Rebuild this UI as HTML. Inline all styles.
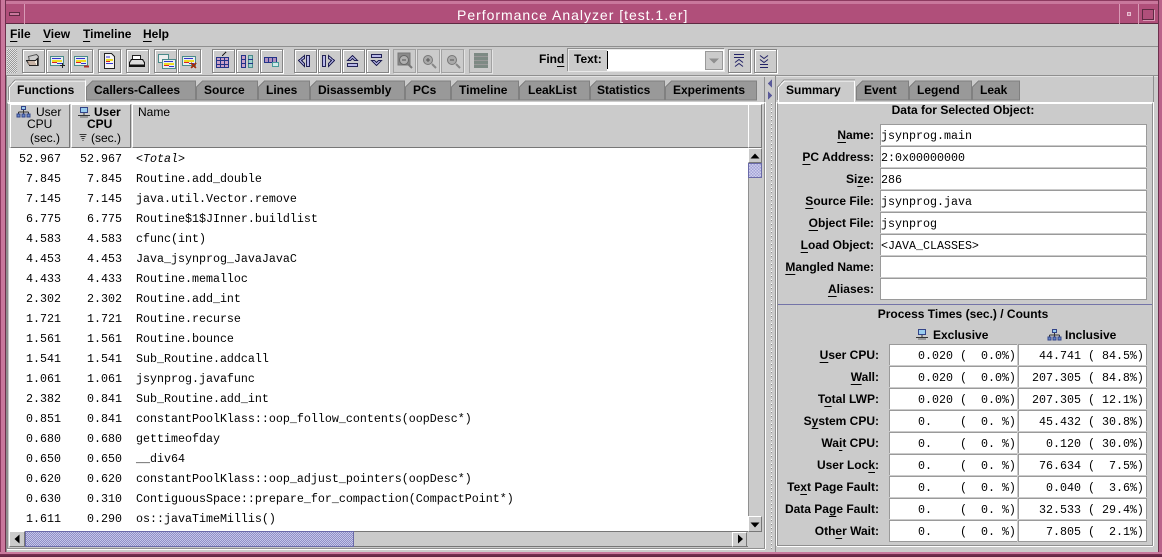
<!DOCTYPE html>
<html><head><meta charset="utf-8"><title>Performance Analyzer</title>
<style>
html,body{margin:0;padding:0;background:#ccc}
#w{position:relative;width:1162px;height:557px;overflow:hidden;background:#cbcbcb;font:bold 12px "Liberation Sans",sans-serif;color:#000}
#w div{position:absolute;box-sizing:border-box}
.t{white-space:pre;line-height:14px;height:14px}
.r{text-align:right}
.c{text-align:center}
.n{font-weight:normal}
.m{font:11.67px/22px "Liberation Mono",monospace;white-space:pre;height:20px}
u{text-underline-offset:3px;text-decoration-thickness:1px}
.f{background:#fff;border:1px solid #9a9a9a;outline:1px solid #cbcbcb}
.b{width:23px;height:24px;top:49px;border:1px solid #858585;box-shadow:1px 1px 0 #fff,inset 1px 1px 0 #fff}
.d{width:23px;height:24px;top:49px;border:1px solid #a2a2a2;box-shadow:1px 1px 0 #e4e4e4}
svg{position:absolute;left:0;top:0;shape-rendering:crispEdges}
</style></head><body>
<div id="w">
<!-- window frame -->
<div style="left:0;top:0;width:1162px;height:5px;background:#c9779c;border-top:1px solid #8d3a60"></div>
<div style="left:0;top:4px;width:1162px;height:20px;background:#b04f7a;border-bottom:1px solid #5e2a42"></div>
<div style="left:0;top:0;width:6px;height:557px;background:#c9779c;border-left:1px solid #8d3a60;border-right:1px solid #6d304d"></div>
<div style="left:1158px;top:0;width:4px;height:557px;background:#b9628a;border-left:1px solid #6d304d"></div>
<div style="left:0;top:552px;width:1162px;height:5px;background:linear-gradient(#c9779c 0,#c9779c 2px,#7a2f52 2px,#5c2340 5px)"></div>
<div style="left:24px;top:4px;width:1px;height:20px;background:#d99ab6"></div>
<div style="left:1119px;top:4px;width:1px;height:20px;background:#d99ab6"></div>
<div style="left:1138px;top:4px;width:1px;height:20px;background:#d99ab6"></div>
<div style="left:9px;top:12px;width:11px;height:4px;background:#c9779c;border:1px solid #5e2a42"></div>
<div style="left:1127px;top:12px;width:4px;height:4px;background:#c9779c;border:1px solid #e6bfd0"></div>
<div style="left:1142px;top:9px;width:12px;height:11px;border:1px solid #5e2a42;box-shadow:1px 1px 0 #d99ab6"></div>
<div class="t n" style="left:457px;top:8px;color:#fff;font-size:14px;line-height:15px;height:15px;letter-spacing:.98px">Performance Analyzer [test.1.er]</div>

<!-- menu -->
<div class="t" style="left:10px;top:27px"><u>F</u>ile</div>
<div class="t" style="left:43px;top:27px"><u>V</u>iew</div>
<div class="t" style="left:83px;top:27px"><u>T</u>imeline</div>
<div class="t" style="left:143px;top:27px"><u>H</u>elp</div>
<div style="left:6px;top:46px;width:1152px;height:1px;background:#8f8f8f"></div>
<div style="left:6px;top:75px;width:1152px;height:1px;background:#8f8f8f"></div>
<div style="left:6px;top:76px;width:1152px;height:1px;background:#e2e2e2"></div>
<div style="left:7px;top:49px;width:10px;height:24px;background:conic-gradient(#9a9a9a 25%,#e4e4e4 0 50%,#9a9a9a 0 75%,#e4e4e4 0) 0 0/2px 2px"></div>

<!-- toolbar buttons -->
<div class="b" style="left:22px"></div><div class="b" style="left:46px"></div><div class="b" style="left:70px"></div>
<div class="b" style="left:98px"></div><div class="b" style="left:126px"></div><div class="b" style="left:154px"></div><div class="b" style="left:178px"></div>
<div class="b" style="left:212px"></div><div class="b" style="left:236px"></div><div class="b" style="left:260px"></div>
<div class="b" style="left:294px"></div><div class="b" style="left:318px"></div><div class="b" style="left:342px"></div><div class="b" style="left:366px"></div>
<div class="d" style="left:393px"></div><div class="d" style="left:417px"></div><div class="d" style="left:441px"></div><div class="d" style="left:469px"></div>
<div class="b" style="left:728px"></div><div class="b" style="left:754px"></div>

<!-- find -->
<div class="t" style="left:539px;top:52px">Fin<u>d</u></div>
<div style="left:568px;top:49px;width:157px;height:23px;background:#fff;border:1px solid #e8e8e8;box-shadow:-1px -1px 0 #8f8f8f"></div>
<div style="left:569px;top:50px;width:38px;height:21px;background:#cbcbcb"></div>
<div class="t" style="left:574px;top:52px">Text:</div>
<div style="left:607px;top:51px;width:1px;height:18px;background:#000"></div>
<div style="left:705px;top:51px;width:18px;height:19px;background:#cbcbcb;border:1px solid #999"></div>

<!-- left pane frame -->
<div style="left:6px;top:76px;width:1px;height:476px;background:#8f8f8f"></div>
<div style="left:7px;top:102px;width:758px;height:447px;border:1px solid #8f8f8f;border-top:2px solid #fff;box-shadow:0 1px 0 #fff,1px 0 0 #fff"></div>

<!-- table header -->
<div style="left:10px;top:104px;width:60px;height:44px;background:#cbcbcb;border:1px solid #fff;border-bottom:1px solid #777;border-right:1px solid #777"></div>
<div style="left:71px;top:104px;width:60px;height:44px;background:#cbcbcb;border:1px solid #fff;border-bottom:1px solid #777;border-right:1px solid #777"></div>
<div style="left:132px;top:104px;width:616px;height:44px;background:#cbcbcb;border:1px solid #fff;border-bottom:1px solid #777;border-right:0"></div>
<div style="left:748px;top:104px;width:14px;height:44px;background:#cbcbcb;border:1px solid #fff;border-bottom:1px solid #777;border-right:1px solid #777"></div>
<div class="t n" style="left:36px;top:105px">User</div>
<div class="t n" style="left:27px;top:117px">CPU</div>
<div class="t n" style="left:30px;top:131px">(sec.)</div>
<div class="t" style="left:94px;top:105px">User</div>
<div class="t" style="left:87px;top:117px">CPU</div>
<div class="t n" style="left:91px;top:131px">(sec.)</div>
<div class="t n" style="left:138px;top:105px">Name</div>

<!-- table body -->
<div style="left:9px;top:148px;width:739px;height:384px;background:#fff"></div>
<div class="m r" style="left:9px;width:52px;top:148px">52.967</div><div class="m r" style="left:70px;width:52px;top:148px">52.967</div><div class="m" style="left:136px;top:148px;font-style:italic">&lt;Total&gt;</div>
<div class="m r" style="left:9px;width:52px;top:168px">7.845</div><div class="m r" style="left:70px;width:52px;top:168px">7.845</div><div class="m" style="left:136px;top:168px">Routine.add_double</div>
<div class="m r" style="left:9px;width:52px;top:188px">7.145</div><div class="m r" style="left:70px;width:52px;top:188px">7.145</div><div class="m" style="left:136px;top:188px">java.util.Vector.remove</div>
<div class="m r" style="left:9px;width:52px;top:208px">6.775</div><div class="m r" style="left:70px;width:52px;top:208px">6.775</div><div class="m" style="left:136px;top:208px">Routine$1$JInner.buildlist</div>
<div class="m r" style="left:9px;width:52px;top:228px">4.583</div><div class="m r" style="left:70px;width:52px;top:228px">4.583</div><div class="m" style="left:136px;top:228px">cfunc(int)</div>
<div class="m r" style="left:9px;width:52px;top:248px">4.453</div><div class="m r" style="left:70px;width:52px;top:248px">4.453</div><div class="m" style="left:136px;top:248px">Java_jsynprog_JavaJavaC</div>
<div class="m r" style="left:9px;width:52px;top:268px">4.433</div><div class="m r" style="left:70px;width:52px;top:268px">4.433</div><div class="m" style="left:136px;top:268px">Routine.memalloc</div>
<div class="m r" style="left:9px;width:52px;top:288px">2.302</div><div class="m r" style="left:70px;width:52px;top:288px">2.302</div><div class="m" style="left:136px;top:288px">Routine.add_int</div>
<div class="m r" style="left:9px;width:52px;top:308px">1.721</div><div class="m r" style="left:70px;width:52px;top:308px">1.721</div><div class="m" style="left:136px;top:308px">Routine.recurse</div>
<div class="m r" style="left:9px;width:52px;top:328px">1.561</div><div class="m r" style="left:70px;width:52px;top:328px">1.561</div><div class="m" style="left:136px;top:328px">Routine.bounce</div>
<div class="m r" style="left:9px;width:52px;top:348px">1.541</div><div class="m r" style="left:70px;width:52px;top:348px">1.541</div><div class="m" style="left:136px;top:348px">Sub_Routine.addcall</div>
<div class="m r" style="left:9px;width:52px;top:368px">1.061</div><div class="m r" style="left:70px;width:52px;top:368px">1.061</div><div class="m" style="left:136px;top:368px">jsynprog.javafunc</div>
<div class="m r" style="left:9px;width:52px;top:388px">2.382</div><div class="m r" style="left:70px;width:52px;top:388px">0.841</div><div class="m" style="left:136px;top:388px">Sub_Routine.add_int</div>
<div class="m r" style="left:9px;width:52px;top:408px">0.851</div><div class="m r" style="left:70px;width:52px;top:408px">0.841</div><div class="m" style="left:136px;top:408px">constantPoolKlass::oop_follow_contents(oopDesc*)</div>
<div class="m r" style="left:9px;width:52px;top:428px">0.680</div><div class="m r" style="left:70px;width:52px;top:428px">0.680</div><div class="m" style="left:136px;top:428px">gettimeofday</div>
<div class="m r" style="left:9px;width:52px;top:448px">0.650</div><div class="m r" style="left:70px;width:52px;top:448px">0.650</div><div class="m" style="left:136px;top:448px">__div64</div>
<div class="m r" style="left:9px;width:52px;top:468px">0.620</div><div class="m r" style="left:70px;width:52px;top:468px">0.620</div><div class="m" style="left:136px;top:468px">constantPoolKlass::oop_adjust_pointers(oopDesc*)</div>
<div class="m r" style="left:9px;width:52px;top:488px">0.630</div><div class="m r" style="left:70px;width:52px;top:488px">0.310</div><div class="m" style="left:136px;top:488px">ContiguousSpace::prepare_for_compaction(CompactPoint*)</div>
<div class="m r" style="left:9px;width:52px;top:508px">1.611</div><div class="m r" style="left:70px;width:52px;top:508px">0.290</div><div class="m" style="left:136px;top:508px">os::javaTimeMillis()</div>

<!-- scrollbars -->
<div style="left:748px;top:148px;width:14px;height:384px;background:#cbcbcb;border-left:1px solid #8f8f8f"></div>
<div style="left:748px;top:148px;width:14px;height:15px;border:1px solid #fff;border-right-color:#777;border-bottom-color:#777;background:#cbcbcb"></div>
<div style="left:748px;top:163px;width:14px;height:15px;border:1px solid #6a6aa8;background:#a3a3d6 conic-gradient(#a3a3d6 25%,#cfcfee 0 50%,#a3a3d6 0 75%,#cfcfee 0) 0 0/3px 3px"></div>
<div style="left:748px;top:516px;width:14px;height:16px;border:1px solid #fff;border-right-color:#777;border-bottom-color:#777;background:#cbcbcb"></div>
<div style="left:9px;top:531px;width:739px;height:16px;background:#cbcbcb;border-top:1px solid #777;border-bottom:1px solid #777"></div>
<div style="left:9px;top:531px;width:16px;height:16px;border:1px solid #fff;border-right-color:#777;border-bottom-color:#777;background:#cbcbcb"></div>
<div style="left:25px;top:531px;width:329px;height:16px;border:1px solid #6a6aa8;background:#a3a3d6 conic-gradient(#8f8fc8 25%,#c5c5e8 0 50%,#8f8fc8 0 75%,#c5c5e8 0) 0 0/2px 2px"></div>
<div style="left:732px;top:532px;width:15px;height:15px;border:1px solid #fff;border-right-color:#777;border-bottom-color:#777;background:#cbcbcb"></div>

<!-- splitter -->
<div style="left:771px;top:103px;width:1px;height:446px;background:repeating-linear-gradient(#fff 0 1px,#8f8f8f 1px 2px,#cbcbcb 2px 4px)"></div>
<div style="left:775px;top:76px;width:1px;height:476px;background:#8f8f8f"></div>

<!-- right panel -->
<div style="left:777px;top:102px;width:376px;height:444px;border:1px solid #8f8f8f;border-top:2px solid #fff;box-shadow:0 1px 0 #fff,1px 0 0 #fff,-1px 0 0 #fff"></div>
<div class="t c" style="left:777px;width:372px;top:103px">Data for Selected Object:</div>
<div class="t r" style="left:780px;width:94px;top:128px"><u>N</u>ame:</div><div class="f" style="left:880px;top:124px;width:267px;height:22px"></div><div class="m" style="left:881px;top:125px">jsynprog.main</div>
<div class="t r" style="left:780px;width:94px;top:150px"><u>P</u>C Address:</div><div class="f" style="left:880px;top:146px;width:267px;height:22px"></div><div class="m" style="left:881px;top:147px">2:0x00000000</div>
<div class="t r" style="left:780px;width:94px;top:172px">Si<u>z</u>e:</div><div class="f" style="left:880px;top:168px;width:267px;height:22px"></div><div class="m" style="left:881px;top:169px">286</div>
<div class="t r" style="left:780px;width:94px;top:194px"><u>S</u>ource File:</div><div class="f" style="left:880px;top:190px;width:267px;height:22px"></div><div class="m" style="left:881px;top:191px">jsynprog.java</div>
<div class="t r" style="left:780px;width:94px;top:216px"><u>O</u>bject File:</div><div class="f" style="left:880px;top:212px;width:267px;height:22px"></div><div class="m" style="left:881px;top:213px">jsynprog</div>
<div class="t r" style="left:780px;width:94px;top:238px"><u>L</u>oad Object:</div><div class="f" style="left:880px;top:234px;width:267px;height:22px"></div><div class="m" style="left:881px;top:235px">&lt;JAVA_CLASSES&gt;</div>
<div class="t r" style="left:780px;width:94px;top:260px"><u>M</u>angled Name:</div><div class="f" style="left:880px;top:256px;width:267px;height:22px"></div>
<div class="t r" style="left:780px;width:94px;top:282px"><u>A</u>liases:</div><div class="f" style="left:880px;top:278px;width:267px;height:22px"></div>
<div style="left:778px;top:304px;width:374px;height:1px;background:#7474a8"></div>
<div class="t c" style="left:777px;width:372px;top:307px">Process Times (sec.) / Counts</div>
<div class="t" style="left:933px;top:328px">Exclusive</div>
<div class="t" style="left:1065px;top:328px">Inclusive</div>

<div class="t r" style="left:780px;width:99px;top:348px"><u>U</u>ser CPU:</div><div class="f" style="left:889px;top:344px;width:129px;height:22px"></div><div class="f" style="left:1018px;top:344px;width:129px;height:22px"></div><div class="m" style="left:918px;top:345px">0.020 (  0.0%)</div><div class="m" style="left:1039px;top:345px">44.741 ( 84.5%)</div>
<div class="t r" style="left:780px;width:99px;top:370px"><u>W</u>all:</div><div class="f" style="left:889px;top:366px;width:129px;height:22px"></div><div class="f" style="left:1018px;top:366px;width:129px;height:22px"></div><div class="m" style="left:918px;top:367px">0.020 (  0.0%)</div><div class="m" style="left:1032px;top:367px">207.305 ( 84.8%)</div>
<div class="t r" style="left:780px;width:99px;top:392px">T<u>o</u>tal LWP:</div><div class="f" style="left:889px;top:388px;width:129px;height:22px"></div><div class="f" style="left:1018px;top:388px;width:129px;height:22px"></div><div class="m" style="left:918px;top:389px">0.020 (  0.0%)</div><div class="m" style="left:1032px;top:389px">207.305 ( 12.1%)</div>
<div class="t r" style="left:780px;width:99px;top:414px">S<u>y</u>stem CPU:</div><div class="f" style="left:889px;top:410px;width:129px;height:22px"></div><div class="f" style="left:1018px;top:410px;width:129px;height:22px"></div><div class="m" style="left:918px;top:411px">0.    (  0. %)</div><div class="m" style="left:1039px;top:411px">45.432 ( 30.8%)</div>
<div class="t r" style="left:780px;width:99px;top:436px">Wa<u>i</u>t CPU:</div><div class="f" style="left:889px;top:432px;width:129px;height:22px"></div><div class="f" style="left:1018px;top:432px;width:129px;height:22px"></div><div class="m" style="left:918px;top:433px">0.    (  0. %)</div><div class="m" style="left:1046px;top:433px">0.120 ( 30.0%)</div>
<div class="t r" style="left:780px;width:99px;top:458px">User Loc<u>k</u>:</div><div class="f" style="left:889px;top:454px;width:129px;height:22px"></div><div class="f" style="left:1018px;top:454px;width:129px;height:22px"></div><div class="m" style="left:918px;top:455px">0.    (  0. %)</div><div class="m" style="left:1039px;top:455px">76.634 (  7.5%)</div>
<div class="t r" style="left:780px;width:99px;top:480px">Te<u>x</u>t Page Fault:</div><div class="f" style="left:889px;top:476px;width:129px;height:22px"></div><div class="f" style="left:1018px;top:476px;width:129px;height:22px"></div><div class="m" style="left:918px;top:477px">0.    (  0. %)</div><div class="m" style="left:1046px;top:477px">0.040 (  3.6%)</div>
<div class="t r" style="left:780px;width:99px;top:502px">Data Pa<u>g</u>e Fault:</div><div class="f" style="left:889px;top:498px;width:129px;height:22px"></div><div class="f" style="left:1018px;top:498px;width:129px;height:22px"></div><div class="m" style="left:918px;top:499px">0.    (  0. %)</div><div class="m" style="left:1039px;top:499px">32.533 ( 29.4%)</div>
<div class="t r" style="left:780px;width:99px;top:524px">Oth<u>e</u>r Wait:</div><div class="f" style="left:889px;top:520px;width:129px;height:22px"></div><div class="f" style="left:1018px;top:520px;width:129px;height:22px"></div><div class="m" style="left:918px;top:521px">0.    (  0. %)</div><div class="m" style="left:1046px;top:521px">7.805 (  2.1%)</div>

<!-- graphics layer -->
<svg width="1162" height="557" viewBox="0 0 1162 557" fill="none">
<defs>
<g id="sheet"><rect x="0.5" y="0.5" width="13" height="9" fill="#e8f0f0" stroke="#4a8a8a"/><rect x="2" y="2" width="9" height="1" fill="#3333cc"/><rect x="2" y="4" width="10" height="2" fill="#eedd22"/><rect x="2" y="6" width="5" height="1" fill="#dd2222"/><rect x="7" y="7" width="5" height="1" fill="#3333cc"/></g>
<g id="net"><rect x="4.5" y="0.5" width="4" height="3" fill="#99ccee" stroke="#334488"/><path d="M6.500 4V6M1.500 6H11.500M1.500 6V8M6.500 6V8M11.500 6V8" stroke="#333"/><rect x="0" y="8" width="3" height="3" fill="#6688cc" stroke="#334488" stroke-width=".6"/><rect x="5" y="8" width="3" height="3" fill="#6688cc" stroke="#334488" stroke-width=".6"/><rect x="10" y="8" width="3" height="3" fill="#6688cc" stroke="#334488" stroke-width=".6"/></g>
<g id="pc"><rect x="2.5" y="0.5" width="7" height="5" fill="#99ccee" stroke="#334488"/><path d="M6 6V8M0 8.500H12" stroke="#333"/><path d="M2 10H10" stroke="#666"/></g>
</defs>
<!-- tabs left -->
<path d="M258.500 100V87L264.500 81H309.500V100Z" fill="#999" stroke="#808080"/>
<path d="M86.500 100V87L92.500 81H195.500V100Z" fill="#999" stroke="#808080"/>
<path d="M196.500 100V87L202.500 81H257.500V100Z" fill="#999" stroke="#808080"/>
<path d="M310.500 100V87L316.500 81H404.500V100Z" fill="#999" stroke="#808080"/>
<path d="M405.500 100V87L411.500 81H450.500V100Z" fill="#999" stroke="#808080"/>
<path d="M451.500 100V87L457.500 81H518.500V100Z" fill="#999" stroke="#808080"/>
<path d="M519.500 100V87L525.500 81H589.500V100Z" fill="#999" stroke="#808080"/>
<path d="M590.500 100V87L596.500 81H664.500V100Z" fill="#999" stroke="#808080"/>
<path d="M665.500 100V87L671.500 81H756.500V100Z" fill="#999" stroke="#808080"/>
<path d="M9.500 102V87L15.500 81H85.500V102" fill="#cbcbcb" stroke="#fff"/>
<path d="M8.500 100V87L15 80H85" stroke="#8f8f8f"/>
<!-- tabs right -->
<path d="M856.500 100V87L862.500 81H908.500V100Z" fill="#999" stroke="#808080"/>
<path d="M909.500 100V87L915.500 81H971.500V100Z" fill="#999" stroke="#808080"/>
<path d="M972.500 100V87L978.500 81H1019.500V100Z" fill="#999" stroke="#808080"/>
<path d="M778.500 102V87L784.500 81H854.500V102" fill="#cbcbcb" stroke="#fff"/>
<path d="M777.500 100V87L784 80H855" stroke="#8f8f8f"/>
<!-- pane top frame -->
<path d="M764.500 77V102M1153.500 76V102" stroke="#8f8f8f"/>
<!-- splitter arrows -->
<path d="M772 79V88L768 83.500Z" fill="#5a5a9a"/>
<path d="M768 91V100L772 95.500Z" fill="#5a5a9a"/>
<!-- scroll arrows -->
<g shape-rendering="auto" fill="#000">
<path d="M750.500 158.500L755 153.500L759.500 158.500Z"/>
<path d="M750.500 522.500L759.500 522.500L755 527.500Z"/>
<path d="M19.500 534.500V543.500L14.500 539Z"/>
<path d="M738 534.500V543.500L743 539Z"/>
<path d="M709 58.500H719L714 63.500Z" fill="#8f8f8f"/>
</g>
<!-- header icons -->
<use href="#net" x="17" y="106"/>
<use href="#pc" x="78" y="107"/>
<path d="M79.500 134.500H86.500M80.500 136.500H85.500M81.500 138.500H84.500M82.500 140.500H83.500" stroke="#333"/>
<use href="#pc" x="916" y="329"/>
<use href="#net" x="1048" y="329"/>
<!-- folder -->
<g>
<path d="M28.500 56.500L36.500 54.500L38.500 56.500V65.500H30.500Z" fill="#ccc" stroke="#555"/>
<path d="M26.500 60.500H35.500L37.500 58.500V65.500H29.500Z" fill="#f4ece0" stroke="#222"/>
<path d="M28 62H35M28 64H36" stroke="#9b7b6b"/>
</g>
<use href="#sheet" x="50" y="56"/><path d="M60 65.500H65M62.500 63V68" stroke="#222"/>
<use href="#sheet" x="74" y="56"/><path d="M84 66.500H89" stroke="#b03030" stroke-width="2"/>
<!-- doc -->
<path d="M104.500 53.500H111.500L114.500 56.500V68.500H104.500Z" fill="#f4f4f4" stroke="#222"/>
<path d="M106 57H110" stroke="#3333cc"/><rect x="106" y="59" width="7" height="2" fill="#eedd22"/><rect x="106" y="61" width="4" height="1" fill="#dd2222"/><rect x="106" y="63" width="7" height="1" fill="#3333cc"/>
<!-- printer -->
<path d="M132.500 55.500H140.500V59.500H132.500Z" fill="#fff" stroke="#222"/>
<path d="M131.500 59.500H142.500L144.500 62.500V66.500H129.500V62.500Z" fill="#ddd" stroke="#111"/>
<path d="M130 65.500H144" stroke="#111" stroke-width="2"/>
<!-- copies -->
<rect x="158.500" y="54.500" width="10" height="8" fill="#eee" stroke="#4a8a8a"/>
<use href="#sheet" x="162" y="59"/>
<use href="#sheet" x="182" y="56"/><path d="M191 63L196 68M196 63L191 68" stroke="#a03010" stroke-width="2"/>
<!-- columns -->
<g>
<rect x="216.500" y="57.500" width="12" height="10" fill="#c8a0c8" stroke="#223388"/><path d="M220.500 57V68M224.500 57V68M216 60.500H229M216 64.500H229" stroke="#223388"/><path d="M222 56L226 52" stroke="#222"/>
<rect x="241.500" y="55.500" width="4" height="12" fill="#c8a0c8" stroke="#223388"/><rect x="248.500" y="55.500" width="4" height="12" fill="#a0d0d0" stroke="#4a8a8a"/><path d="M241 59.500H246M241 63.500H246M248 59.500H253M248 63.500H253" stroke="#223388"/>
<rect x="264.500" y="57.500" width="12" height="5" fill="#b090c0" stroke="#223388"/><path d="M268.500 57V63M272.500 57V63" stroke="#223388"/><rect x="272.500" y="62.500" width="6" height="4" fill="#d0eaea" stroke="#4a9a9a"/>
</g>
<!-- nav -->
<g fill="#b8b8e8" stroke="#222255">
<path d="M298.500 60.500L304.500 55.500V58.500L301.500 60.500L304.500 63.500V66.500Z"/><rect x="306.500" y="55.500" width="3" height="11"/>
<rect x="322.500" y="55.500" width="3" height="11"/><path d="M334.500 60.500L328.500 55.500V58.500L331.500 60.500L328.500 63.500V66.500Z"/>
<path d="M347.500 60.500L352.500 55.500L357.500 60.500H354.500L352.500 58.500L350.500 60.500Z"/><rect x="347.500" y="63.500" width="10" height="3"/>
<rect x="371.500" y="54.500" width="10" height="3"/><path d="M371.500 60.500L376.500 65.500L381.500 60.500H378.500L376.500 62.500L374.500 60.500Z"/>
</g>
<!-- disabled zoom icons -->
<g>
<rect x="398" y="53" width="12" height="12" fill="#8a8a8a" stroke="#777"/><circle cx="404" cy="60" r="4.500" fill="#b0b0b0" stroke="#666" shape-rendering="auto"/><path d="M402 60H406" stroke="#555"/><path d="M408 64L412 68" stroke="#777" stroke-width="2" shape-rendering="auto"/>
<circle cx="428" cy="60" r="4.500" fill="#aaa" stroke="#777" shape-rendering="auto"/><path d="M426 60H430M428 58V62" stroke="#555"/><path d="M432 64L436 68" stroke="#888" stroke-width="2" shape-rendering="auto"/>
<circle cx="452" cy="60" r="4.500" fill="#aaa" stroke="#777" shape-rendering="auto"/><path d="M450 60H454" stroke="#555"/><path d="M456 64L460 68" stroke="#888" stroke-width="2" shape-rendering="auto"/>
<rect x="474" y="53" width="14" height="15" fill="#7d8a84"/><path d="M474 56.500H488M474 60.500H488M474 64.500H488" stroke="#999"/>
</g>
<!-- find arrows -->
<g stroke="#222266">
<path d="M734 54.500H744M734 57.500H744"/>
<path d="M735 62.500L739 59.500L743 62.500M735 66.500L739 63.500L743 66.500" shape-rendering="auto"/>
<path d="M760 59.500L764 62.500L768 59.500M760 55.500L764 58.500L768 55.500" shape-rendering="auto"/>
<path d="M760 64.500H768M760 67.500H768"/>
</g>
</svg>

<!-- tab labels -->
<div class="t" style="left:17px;top:83px">Functions</div>
<div class="t" style="left:94px;top:83px">Callers-Callees</div>
<div class="t" style="left:204px;top:83px">Source</div>
<div class="t" style="left:266px;top:83px">Lines</div>
<div class="t" style="left:318px;top:83px">Disassembly</div>
<div class="t" style="left:413px;top:83px">PCs</div>
<div class="t" style="left:459px;top:83px">Timeline</div>
<div class="t" style="left:528px;top:83px">LeakList</div>
<div class="t" style="left:597px;top:83px">Statistics</div>
<div class="t" style="left:673px;top:83px">Experiments</div>
<div class="t" style="left:786px;top:83px">Summary</div>
<div class="t" style="left:864px;top:83px">Event</div>
<div class="t" style="left:917px;top:83px">Legend</div>
<div class="t" style="left:980px;top:83px">Leak</div>
</div>
</body></html>
